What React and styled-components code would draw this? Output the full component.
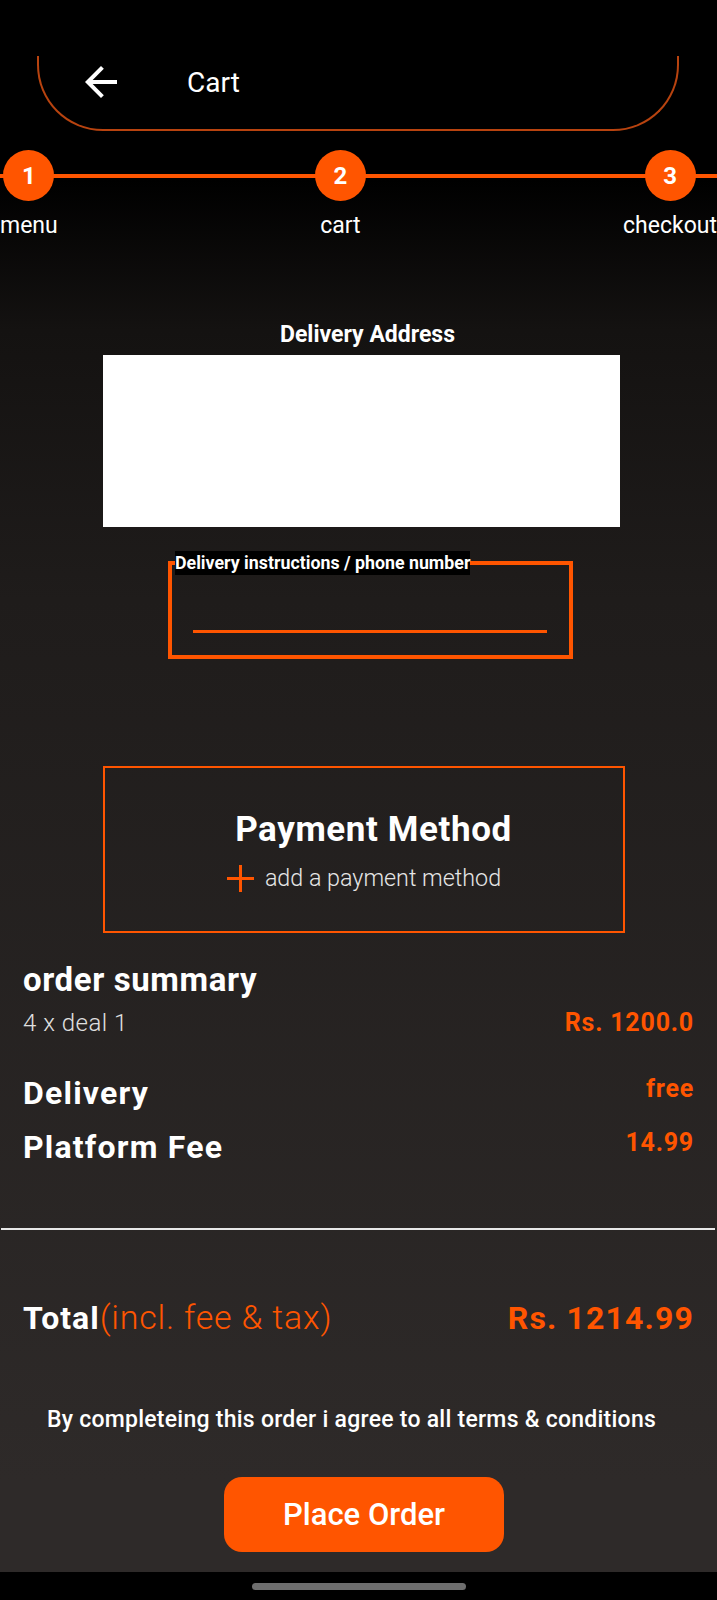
import React from "react";
import styled, { createGlobalStyle } from "styled-components";

const ORANGE = "#ff5500";

const GlobalStyle = createGlobalStyle`
  body {
    margin: 0;
    background: #000;
    font-family: Roboto, "Liberation Sans", sans-serif;
  }
  * {
    box-sizing: border-box;
  }
`;

const Page = styled.div`
  min-height: 1600px;
  display: flex;
  flex-direction: column;
  color: #fff;
  background: linear-gradient(
    to bottom,
    #000 0px,
    #000 180px,
    #141211 330px,
    #1f1c1b 600px,
    #2e2a29 1480px,
    #2e2a29 1600px
  );
`;

const StatusBar = styled.div`
  height: 56px;
`;

const AppBar = styled.header`
  height: 75px;
  margin: 0 38px 0 37px;
  border: 2px solid #b8430f;
  border-top: none;
  border-radius: 0 0 66px 66px;
`;

const Toolbar = styled.div`
  height: 52px;
  display: flex;
  align-items: center;
  padding-left: 38px;
  gap: 62px;
`;

const BackButton = styled.button`
  width: 48px;
  height: 48px;
  padding: 0;
  border: none;
  background: none;
  display: flex;
  cursor: pointer;
`;

const Title = styled.h1`
  margin: 0;
  font-size: 28px;
  font-weight: 400;
  color: #fff;
`;

const Stepper = styled.div`
  position: relative;
  display: flex;
  justify-content: space-between;
  margin-top: 19px;

  &::before {
    content: "";
    position: absolute;
    left: 0;
    right: 0;
    top: 24px;
    height: 4px;
    background: ${ORANGE};
  }
`;

const Step = styled.div`
  position: relative;
  display: flex;
  flex-direction: column;
  align-items: center;
  gap: 12px;
`;

const StepDot = styled.div`
  width: 51px;
  height: 51px;
  border-radius: 50%;
  background: ${ORANGE};
  display: flex;
  align-items: center;
  justify-content: center;
  font-size: 24px;
  font-weight: 700;
`;

const StepLabel = styled.span`
  font-size: 23px;
  line-height: 26px;
`;

const AddressSection = styled.section`
  margin: 84px 97px 0 103px;
  display: flex;
  flex-direction: column;
  gap: 8px;
`;

const SectionLabel = styled.div`
  text-align: center;
  font-size: 23px;
  line-height: 24px;
  font-weight: 700;
  padding-left: 12px;
`;

const AddressBox = styled.div`
  height: 172px;
  background: #fff;
`;

const InstructionsField = styled.fieldset`
  width: 405px;
  margin: 24px 0 0 168px;
  padding: 0;
  border: 4px solid ${ORANGE};
`;

const InstructionsLegend = styled.legend`
  margin-left: 3px;
  padding: 0;
  background: #000;
  font-size: 17.8px;
  line-height: 24px;
  font-weight: 700;
  color: #fff;
`;

const InstructionsInput = styled.input`
  display: block;
  width: calc(100% - 43px);
  height: 58px;
  margin: 0 20px 22px 21px;
  padding: 0;
  border: none;
  border-bottom: 3px solid ${ORANGE};
  background: transparent;
  color: #fff;
  font: inherit;
  outline: none;
`;

const PaymentBox = styled.section`
  width: 522px;
  margin: 107px 0 0 103px;
  padding: 42px 0 39px;
  border: 2px solid ${ORANGE};
  display: flex;
  flex-direction: column;
  align-items: center;
  gap: 14px;
`;

const PaymentTitle = styled.h2`
  margin: 0 0 0 19px;
  font-size: 35px;
  line-height: 40px;
  font-weight: 700;
  letter-spacing: 0.6px;
`;

const AddPayment = styled.button`
  display: flex;
  align-items: center;
  gap: 11px;
  padding: 0;
  border: none;
  background: none;
  color: #e6e6e6;
  font-family: inherit;
  font-size: 23.3px;
  line-height: 28px;
  font-weight: 300;
  cursor: pointer;
`;

const Summary = styled.section`
  padding: 0 23px;
  margin-top: 29px;
  display: flex;
  flex-direction: column;
`;

const SummaryHeading = styled.h3`
  margin: 0;
  font-size: 33px;
  line-height: 36px;
  font-weight: 700;
  letter-spacing: 0.6px;
`;

const Row = styled.div`
  display: flex;
  justify-content: space-between;
  align-items: flex-start;
  margin-top: ${(p) => p.$gap}px;
`;

const ItemName = styled.span`
  font-size: 24px;
  line-height: 28px;
  font-weight: 300;
  letter-spacing: 0.5px;
  color: #e0e0e0;
`;

const FeeName = styled.span`
  font-size: 32px;
  line-height: 36px;
  font-weight: 700;
  letter-spacing: 1.2px;
`;

const Amount = styled.span`
  font-size: 25px;
  line-height: 28px;
  font-weight: 700;
  letter-spacing: 0.8px;
  color: ${ORANGE};
`;

const Divider = styled.hr`
  margin: 63px 2px 0 1px;
  border: none;
  height: 2px;
  background: #e8e8e8;
`;

const TotalRow = styled.div`
  display: flex;
  justify-content: space-between;
  align-items: baseline;
  padding: 0 23px;
  margin-top: 68px;
  font-size: 32px;
  line-height: 38px;
`;

const TotalLabel = styled.span`
  font-weight: 700;
  letter-spacing: 1px;
`;

const TotalNote = styled.span`
  font-size: 34px;
  font-weight: 300;
  letter-spacing: 0.8px;
  color: ${ORANGE};
`;

const TotalAmount = styled.span`
  font-weight: 700;
  letter-spacing: 1.15px;
  color: ${ORANGE};
`;

const Terms = styled.p`
  margin: 71px 0 0;
  padding-right: 14px;
  text-align: center;
  font-size: 23px;
  line-height: 24px;
  font-weight: 500;
  letter-spacing: 0.25px;
`;

const PlaceOrder = styled.button`
  align-self: center;
  width: 280px;
  height: 75px;
  margin: 45px 0 0 11px;
  border: none;
  border-radius: 18px;
  background: ${ORANGE};
  color: #fff;
  font-family: inherit;
  font-size: 31px;
  font-weight: 500;
  cursor: pointer;
`;

const NavBar = styled.div`
  margin-top: auto;
  height: 28px;
  background: #000;
  display: flex;
  justify-content: center;
  padding-top: 11px;
`;

const NavHandle = styled.div`
  width: 214px;
  height: 7px;
  margin-left: 1px;
  border-radius: 4px;
  background: #6e6e6e;
`;

const steps = ["menu", "cart", "checkout"];

function ArrowBack() {
  return (
    <svg width="48" height="48" viewBox="0 0 24 24" fill="#fff">
      <path d="M20 11H7.83l5.59-5.59L12 4l-8 8 8 8 1.41-1.41L7.83 13H20v-2z" />
    </svg>
  );
}

function PlusIcon() {
  return (
    <svg width="27" height="27" viewBox="0 0 27 27" fill={ORANGE}>
      <rect x="0" y="12" width="27" height="3" />
      <rect x="12" y="0" width="3" height="27" />
    </svg>
  );
}

export default function App() {
  return (
    <>
      <GlobalStyle />
      <Page>
        <StatusBar />
        <AppBar>
          <Toolbar>
            <BackButton aria-label="back">
              <ArrowBack />
            </BackButton>
            <Title>Cart</Title>
          </Toolbar>
        </AppBar>

        <Stepper>
          {steps.map((s, i) => (
            <Step key={s}>
              <StepDot>{i + 1}</StepDot>
              <StepLabel>{s}</StepLabel>
            </Step>
          ))}
        </Stepper>

        <AddressSection>
          <SectionLabel>Delivery Address</SectionLabel>
          <AddressBox />
        </AddressSection>

        <InstructionsField>
          <InstructionsLegend>Delivery instructions / phone number</InstructionsLegend>
          <InstructionsInput />
        </InstructionsField>

        <PaymentBox>
          <PaymentTitle>Payment Method</PaymentTitle>
          <AddPayment>
            <PlusIcon />
            add a payment method
          </AddPayment>
        </PaymentBox>

        <Summary>
          <SummaryHeading>order summary</SummaryHeading>
          <Row $gap={11}>
            <ItemName>4 x deal 1</ItemName>
            <Amount>Rs. 1200.0</Amount>
          </Row>
          <Row $gap={38}>
            <FeeName>Delivery</FeeName>
            <Amount>free</Amount>
          </Row>
          <Row $gap={18}>
            <FeeName>Platform Fee</FeeName>
            <Amount>14.99</Amount>
          </Row>
        </Summary>

        <Divider />

        <TotalRow>
          <span>
            <TotalLabel>Total</TotalLabel>
            <TotalNote>(incl. fee &amp; tax)</TotalNote>
          </span>
          <TotalAmount>Rs. 1214.99</TotalAmount>
        </TotalRow>

        <Terms>By completeing this order i agree to all terms &amp; conditions</Terms>

        <PlaceOrder>Place Order</PlaceOrder>

        <NavBar>
          <NavHandle />
        </NavBar>
      </Page>
    </>
  );
}
